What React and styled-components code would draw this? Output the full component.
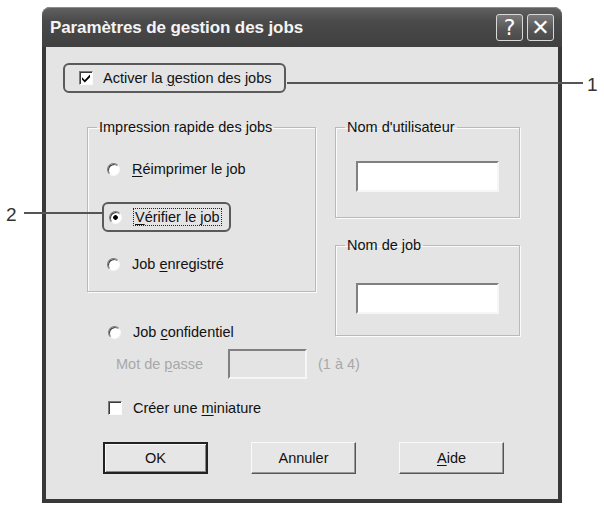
import React from "react";
import styled, { createGlobalStyle } from "styled-components";

const Global = createGlobalStyle`
  html, body { margin: 0; padding: 0; background: #fff; }
  body { font-family: "Liberation Sans", Arial, sans-serif; }
`;

const Stage = styled.div`
  position: relative;
  width: 604px;
  height: 507px;
  overflow: hidden;
  background: #fff;
  padding: 7px 0 0 42px;
  box-sizing: border-box;
`;

const Window = styled.div`
  width: 520px;
  height: 496px;
  box-sizing: border-box;
  background: #383838;
  border-radius: 9px 9px 0 0;
  padding: 0 4px 4px 4px;
  display: flex;
  flex-direction: column;
`;

const TitleBar = styled.div`
  height: 40px;
  flex: none;
  display: flex;
  align-items: center;
  background: linear-gradient(#626262, #4a4a4a 35%, #404040);
  border-radius: 8px 8px 0 0;
  box-shadow: inset 0 1px 0 #8c8c8c;
  margin: 0 -4px;
  padding: 0 8px;
`;

const Title = styled.div`
  flex: 1;
  color: #f4f4f4;
  font-family: "Liberation Sans", Arial, sans-serif;
  font-weight: bold;
  font-size: 17px;
  letter-spacing: -0.1px;
  padding-top: 1px;
`;

const TitleBtn = styled.div`
  width: 27px;
  height: 27px;
  margin-left: 4px;
  border: 1px solid #d8d8d8;
  border-radius: 3px;
  background: linear-gradient(#7a7a7a, #555 60%, #4a4a4a);
  display: flex;
  align-items: center;
  justify-content: center;
  color: #fff;
  font-size: 22px;
  font-family: "DejaVu Sans", sans-serif;
  box-sizing: border-box;
`;

const Client = styled.div`
  flex: 1;
  background: #e4e4e4;
  padding: 16px 0 0 17px;
  display: flex;
  flex-direction: column;
  font-size: 14.5px;
  color: #111;
`;

const Callout = styled.div`
  display: inline-flex;
  align-items: center;
  align-self: flex-start;
  box-sizing: border-box;
  height: ${p => p.$h}px;
  padding: 0 ${p => p.$pr}px 0 ${p => p.$pl}px;
  border: 2px solid #5a5a5a;
  border-radius: 6px;
  margin-left: ${p => p.$ml || 0}px;
  margin-top: ${p => p.$mt || 0}px;
`;

const Check = styled.span`
  width: 14px;
  height: 14px;
  box-sizing: border-box;
  flex: none;
  background: #fff;
  border: 1px solid;
  border-color: #7a7a7a #fafafa #fafafa #7a7a7a;
  box-shadow: inset 1px 1px 0 #3a3a3a;
  display: inline-flex;
  align-items: center;
  justify-content: center;
  margin-right: ${p => p.$gap}px;
`;

const RadioDot = styled.span`
  width: 13px;
  height: 13px;
  box-sizing: border-box;
  flex: none;
  border-radius: 50%;
  border: 1px solid;
  border-color: #7a7a7a #f8f8f8 #f8f8f8 #7a7a7a;
  box-shadow: inset 1px 1px 0 #444;
  background: ${p =>
    p.$checked ? "radial-gradient(circle, #000 0 2px, #fff 2.6px)" : "#fff"};
  margin-right: 12px;
`;

const U = styled.span`
  text-decoration: underline;
  text-underline-offset: 2px;
`;

const Focus = styled.span`
  outline: 1px dotted #222;
  outline-offset: 0px;
  padding: 0 1px;
`;

const Main = styled.div`
  display: flex;
  margin-top: 26px;
  margin-left: 24px;
`;

const LeftCol = styled.div`
  width: 229px;
  display: flex;
  flex-direction: column;
`;

const RightCol = styled.div`
  width: 185px;
  margin-left: 19px;
  display: flex;
  flex-direction: column;
`;

const Group = styled.fieldset`
  margin: ${p => p.$mt || 0}px 0 0 0;
  padding: 0;
  height: ${p => p.$h}px;
  box-sizing: border-box;
  border: 1px solid #b9b9b9;
  box-shadow: 1px 1px 0 #fbfbfb, inset 1px 1px 0 #fbfbfb;
  min-width: 0;
`;

const GroupBody = styled.div`
  display: flex;
  flex-direction: column;
  align-items: flex-start;
  padding-left: ${p => p.$pl}px;
`;

const Legend = styled.legend`
  padding: 0 2px;
  margin-left: 9px;
  font-size: 14.5px;
  line-height: 16px;
  color: #111;
`;

const Row = styled.div`
  display: flex;
  align-items: center;
  white-space: nowrap;
  height: ${p => p.$h || 20}px;
  margin-top: ${p => p.$mt || 0}px;
  margin-left: ${p => p.$ml || 0}px;
  color: ${p => (p.$disabled ? "#a8a8a8" : "#111")};
`;

const FieldLabel = styled.span`
  flex: none;
  width: ${p => p.$w}px;
`;

const Hint = styled.span`
  margin-left: 11px;
`;

const TextBox = styled.div`
  flex: none;
  width: ${p => p.$w}px;
  height: ${p => p.$h}px;
  box-sizing: border-box;
  background: ${p => (p.$disabled ? "#e4e4e4" : "#fff")};
  border: 2px solid;
  border-color: #808080 #f6f6f6 #f6f6f6 #808080;
  margin-top: ${p => p.$mt || 0}px;
`;

const Buttons = styled.div`
  display: flex;
  margin-top: 24px;
  margin-left: 40px;
  gap: 43px;
`;

const Button = styled.div`
  width: 105px;
  height: 32px;
  box-sizing: border-box;
  display: flex;
  align-items: center;
  justify-content: center;
  background: #e6e6e6;
  font-size: 14.5px;
  color: #111;
  border: ${p => (p.$default ? "2px solid #222" : "1px solid")};
  border-color: ${p => (p.$default ? "#222" : "#fafafa #555 #555 #fafafa")};
  box-shadow: ${p =>
    p.$default
      ? "inset 1px 1px 0 #fafafa, inset -1px -1px 0 #888"
      : "inset -1px -1px 0 #999"};
`;

const Note = styled.div`
  position: absolute;
  left: ${p => p.$x}px;
  top: ${p => p.$y}px;
  font-size: 19px;
  color: #333;
  font-family: "Liberation Sans", Arial, sans-serif;
  line-height: 1;
`;

const Leader = styled.div`
  position: absolute;
  left: ${p => p.$x}px;
  top: ${p => p.$y}px;
  width: ${p => p.$w}px;
  height: 2px;
  background: #555;
`;

const CheckMark = () => (
  <svg width="10" height="10" viewBox="0 0 10 10">
    <path d="M1 4.2 L3.8 7 L9 1.6 L9 4.2 L3.8 9.4 L1 6.6Z" fill="#000" />
  </svg>
);

export default function App() {
  return (
    <>
      <Global />
      <Stage>
        <Window>
          <TitleBar>
            <Title>Paramètres de gestion des jobs</Title>
            <TitleBtn>?</TitleBtn>
            <TitleBtn>✕</TitleBtn>
          </TitleBar>
          <Client>
            <Callout $h={30} $pl={14} $pr={13}>
              <Check $gap={10}>
                <CheckMark />
              </Check>
              <span>
                Activer la <U>g</U>estion des jobs
              </span>
            </Callout>

            <Main>
              <LeftCol>
                <Group $h={173}>
                  <Legend>Impression rapide des jobs</Legend>
                  <GroupBody $pl={19}>
                    <Row $mt={24}>
                      <RadioDot />
                      <span>
                        <U>R</U>éimprimer le job
                      </span>
                    </Row>
                    <Callout $h={30} $pl={5} $pr={8} $ml={-5} $mt={23}>
                      <RadioDot $checked />
                      <Focus>
                        <U>V</U>érifier le job
                      </Focus>
                    </Callout>
                    <Row $mt={22}>
                      <RadioDot />
                      <span>
                        Job <U>e</U>nregistré
                      </span>
                    </Row>
                  </GroupBody>
                </Group>
                <Row $mt={30} $ml={21}>
                  <RadioDot />
                  <span>
                    Job <U>c</U>onfidentiel
                  </span>
                </Row>
                <Row $mt={7} $ml={29} $h={30} $disabled>
                  <FieldLabel $w={112}>
                    Mot de <U>p</U>asse
                  </FieldLabel>
                  <TextBox $w={79} $h={30} $disabled />
                  <Hint>(1 à 4)</Hint>
                </Row>
                <Row $mt={19} $ml={21}>
                  <Check $gap={11} />
                  <span>
                    Créer une <U>m</U>iniature
                  </span>
                </Row>
              </LeftCol>
              <RightCol>
                <Group $h={99}>
                  <Legend>Nom d'utilisateur</Legend>
                  <GroupBody $pl={20}>
                    <TextBox $w={143} $h={31} $mt={26} />
                  </GroupBody>
                </Group>
                <Group $h={99} $mt={19}>
                  <Legend>Nom de job</Legend>
                  <GroupBody $pl={20}>
                    <TextBox $w={143} $h={31} $mt={30} />
                  </GroupBody>
                </Group>
              </RightCol>
            </Main>

            <Buttons>
              <Button $default>OK</Button>
              <Button>Annuler</Button>
              <Button>
                <span>
                  <U>A</U>ide
                </span>
              </Button>
            </Buttons>
          </Client>
        </Window>

        <Leader $x={287} $y={82} $w={296} />
        <Note $x={587} $y={75}>1</Note>
        <Leader $x={24} $y={212} $w={79} />
        <Note $x={6} $y={205}>2</Note>
      </Stage>
    </>
  );
}
